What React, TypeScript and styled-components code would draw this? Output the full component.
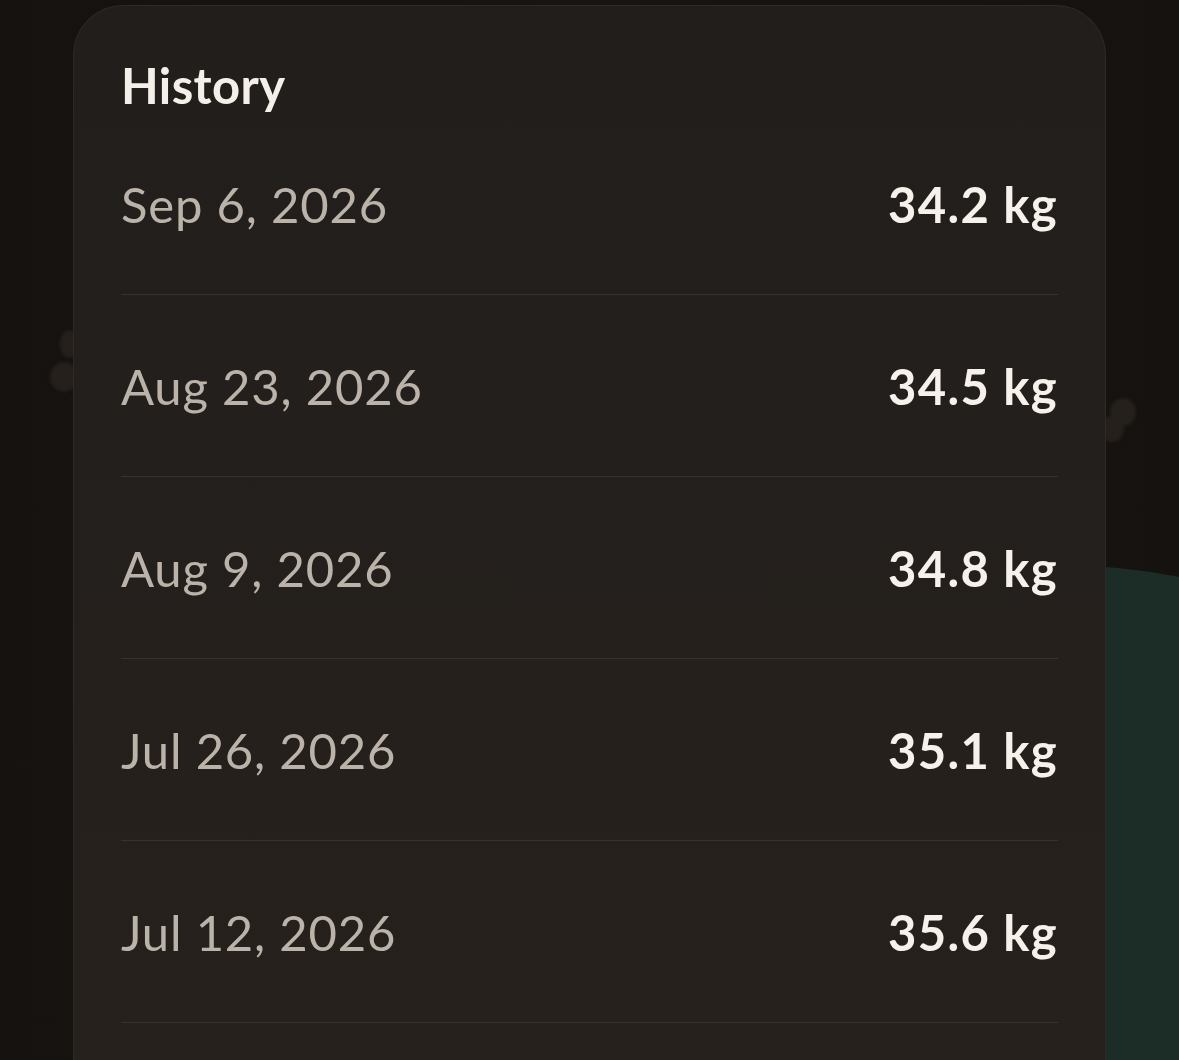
import React from "react";
import styled, { createGlobalStyle } from "styled-components";

const Global = createGlobalStyle`
  html, body { margin: 0; padding: 0; background: #16130f; }
  body { font-family: "Lato", "Open Sans", sans-serif; -webkit-font-smoothing: antialiased; }
`;

const Page = styled.div`
  position: relative;
  width: 1179px;
  height: 1060px;
  overflow: hidden;
  background: linear-gradient(90deg, #15120f 0%, #181410 50%, #15120f 100%);
  display: flex;
  justify-content: flex-start;
  padding: 5px 0 0 73px;
  box-sizing: border-box;
`;

const GreenBlob = styled.div`
  position: absolute;
  left: 460px;
  top: 565px;
  width: 1200px;
  height: 1200px;
  border-radius: 50%;
  background: #1b2d26;
`;

const Paw = styled.div<{ $x: number; $y: number; $w: number; $h: number }>`
  position: absolute;
  left: ${(p) => p.$x}px;
  top: ${(p) => p.$y}px;
  width: ${(p) => p.$w}px;
  height: ${(p) => p.$h}px;
  border-radius: 50%;
  background: #25201c;
  filter: blur(1.5px);
`;

const Card = styled.section`
  position: relative;
  z-index: 1;
  width: 1033px;
  min-height: 1200px;
  box-sizing: border-box;
  border-radius: 50px 50px 0 0;
  background: linear-gradient(180deg, #221e1b 0%, #26211d 100%);
  border: 1px solid #2f2a25;
  padding: 50px 47px 0 47px;
  display: flex;
  flex-direction: column;
`;

const Title = styled.h2`
  margin: 0;
  height: 58px;
  font-size: 49px;
  line-height: 58px;
  font-weight: 700;
  color: #f4efe8;
  letter-spacing: 0.4px;
`;

const List = styled.ul`
  list-style: none;
  margin: 0;
  padding: 0;
  display: flex;
  flex-direction: column;
`;

const Row = styled.li<{ $first?: boolean }>`
  display: flex;
  align-items: center;
  justify-content: space-between;
  height: ${(p) => (p.$first ? 180 : 181)}px;
  border-bottom: 1px solid #38322d;
`;

const DateText = styled.span`
  font-size: 49px;
  font-weight: 400;
  color: #bbb3aa;
  letter-spacing: 0.8px;
`;

const Value = styled.span`
  font-size: 49px;
  font-weight: 700;
  color: #f6f1ea;
  letter-spacing: 1.3px;
`;

const entries = [
  { date: "Sep 6, 2026", value: "34.2 kg" },
  { date: "Aug 23, 2026", value: "34.5 kg" },
  { date: "Aug 9, 2026", value: "34.8 kg" },
  { date: "Jul 26, 2026", value: "35.1 kg" },
  { date: "Jul 12, 2026", value: "35.6 kg" },
];

export default function App() {
  return (
    <>
      <Global />
      <Page>
        <GreenBlob />
        <Paw $x={60} $y={330} $w={18} $h={28} />
        <Paw $x={50} $y={362} $w={28} $h={30} />
        <Paw $x={1110} $y={398} $w={26} $h={28} />
        <Paw $x={1100} $y={416} $w={24} $h={26} />
        <Card>
          <Title>History</Title>
          <List>
            {entries.map((e, i) => (
              <Row key={e.date} $first={i === 0}>
                <DateText>{e.date}</DateText>
                <Value>{e.value}</Value>
              </Row>
            ))}
          </List>
        </Card>
      </Page>
    </>
  );
}
